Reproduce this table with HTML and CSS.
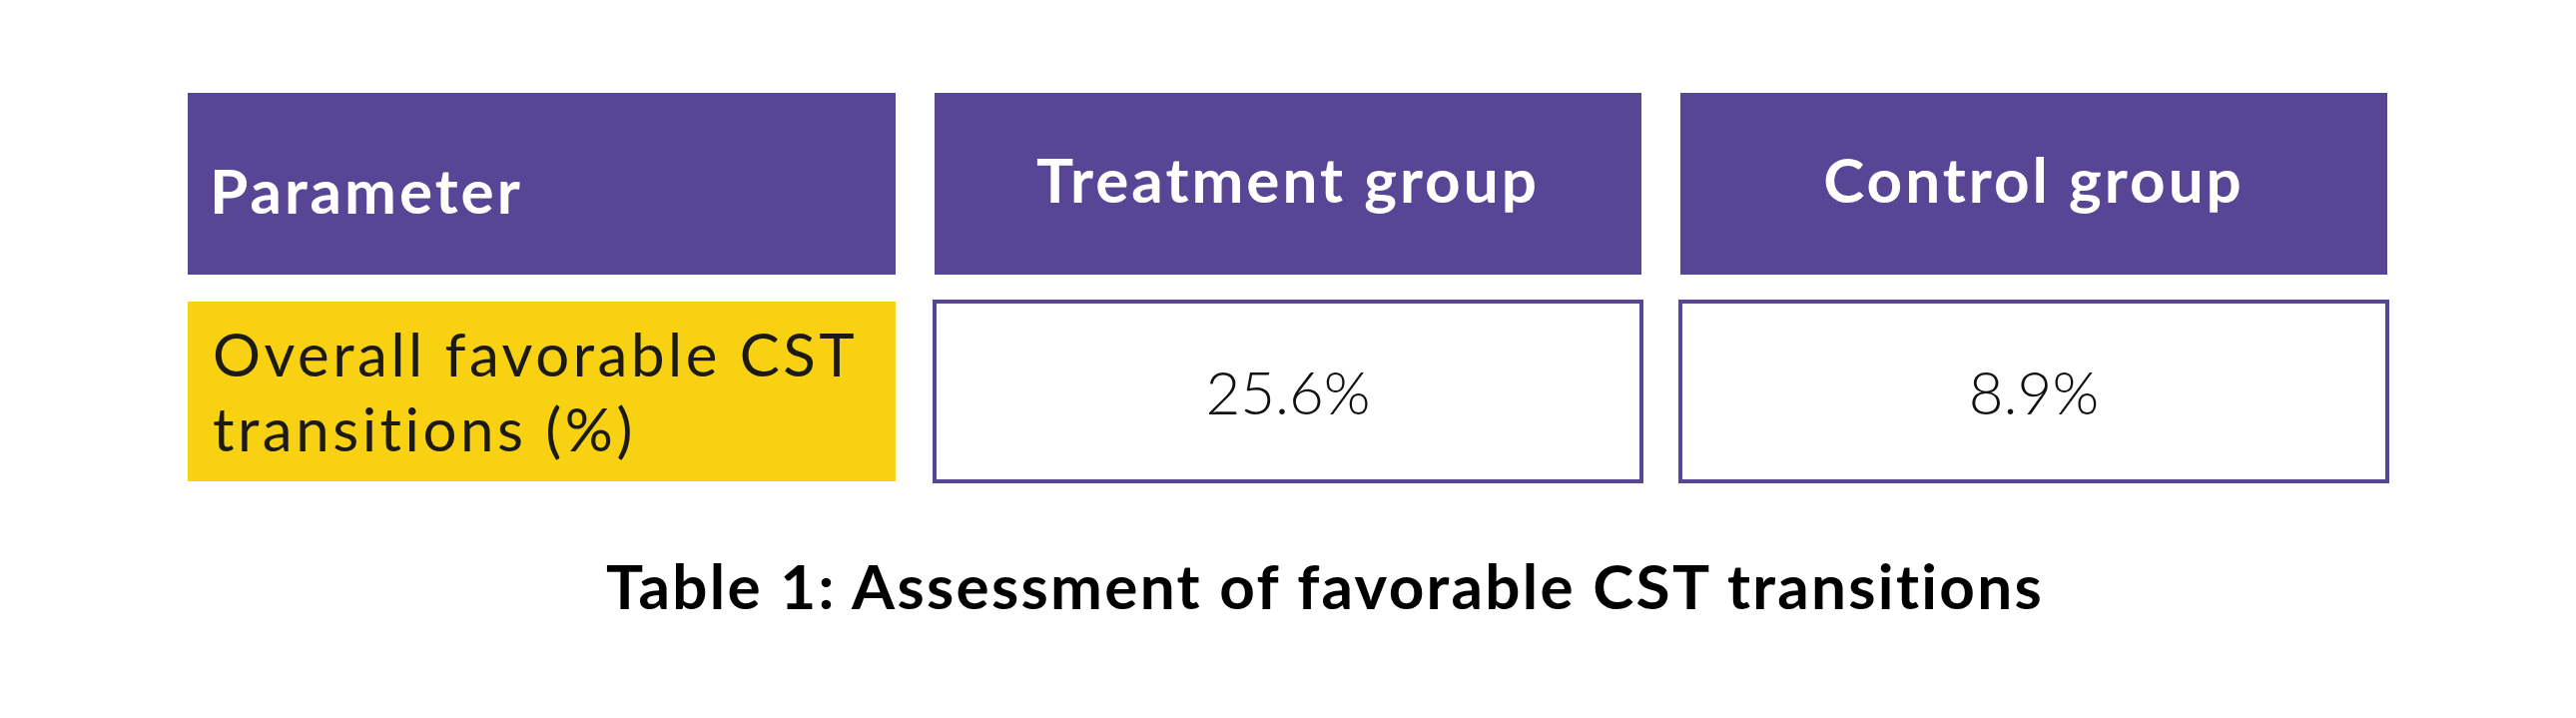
FILE: index.html
```html
<!DOCTYPE html>
<html lang="en">
<head>
<meta charset="utf-8">
<title>Table 1: Assessment of favorable CST transitions</title>
<link rel="stylesheet" href="styles.css">
</head>
<body>
<main class="page">
  <div class="table">
    <div class="head head-left"><span>Parameter</span></div>
    <div class="head"><span>Treatment group</span></div>
    <div class="head"><span>Control group</span></div>
    <div class="param">Overall favorable CST transitions (%)</div>
    <div class="value">25.6%</div>
    <div class="value">8.9%</div>
  </div>
  <p class="caption">Table 1: Assessment of favorable CST transitions</p>
</main>
</body>
</html>
```
FILE: styles.css
```css
html, body {
  margin: 0;
  padding: 0;
  background: #ffffff;
}

.page {
  width: 2580px;
  height: 719px;
  padding: 93px 0 0 188px;
  box-sizing: border-box;
  font-family: Lato, "Open Sans", "Liberation Sans", sans-serif;
  font-variant-ligatures: none;
}

.table {
  display: grid;
  grid-template-columns: 709px 708px 708px;
  grid-template-rows: 182px 180px;
  column-gap: 39px;
  row-gap: 27px;
}

.head {
  background: #574695;
  color: #ffffff;
  font-weight: 700;
  font-size: 62px;
  letter-spacing: 3px;
  display: flex;
  align-items: center;
  justify-content: center;
  padding-bottom: 10px;
  box-sizing: border-box;
}

.head-left {
  justify-content: flex-start;
  padding: 12px 0 0 22px;
}

.param {
  background: #f8d212;
  color: #1c1a14;
  font-size: 60px;
  line-height: 75px;
  font-weight: 400;
  letter-spacing: 3.5px;
  display: flex;
  align-items: center;
  padding: 0 10px 0 25px;
  box-sizing: border-box;
}

.value {
  background: #ffffff;
  outline: 4px solid #574695;
  outline-offset: -2px;
  color: #111111;
  font-size: 60px;
  font-weight: 300;
  display: flex;
  align-items: center;
  justify-content: center;
}

.caption {
  margin: 67px 0 0 0;
  padding-left: 74px;
  width: 2130px;
  text-align: center;
  font-size: 62px;
  font-weight: 700;
  letter-spacing: 2.3px;
  color: #000000;
  line-height: 1.2;
}
```
